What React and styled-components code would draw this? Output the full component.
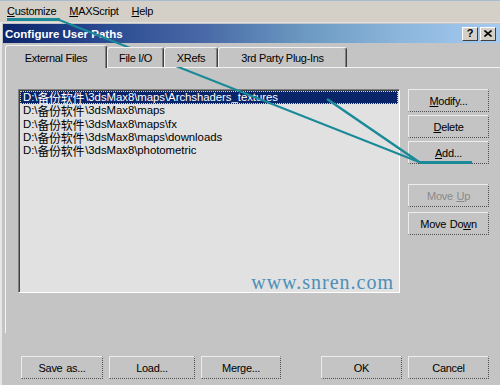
import React from 'react';
import styled, { createGlobalStyle } from 'styled-components';

const GlobalStyle = createGlobalStyle`
  html, body { margin: 0; padding: 0; background: #c4c4c4; }
  body { font-family: "Liberation Sans", Arial, sans-serif; }
`;

const Screen = styled.div`
  position: relative;
  width: 500px;
  height: 385px;
  overflow: hidden;
  display: flex;
  flex-direction: column;
  background: #c4c4c4;
  font-family: "Liberation Sans", Arial, sans-serif;
  font-size: 11px;
  letter-spacing: -0.3px;
  color: #000;
`;

const MenuBar = styled.div`
  height: 21px;
  border-top: 1px solid #a9bccf;
  background: #d4d0c8;
  display: flex;
  align-items: center;
  gap: 13px;
  padding-left: 7px;
`;

const MenuItem = styled.span`
  line-height: 21px;
`;

const Key = styled.span`
  text-decoration: underline;
  text-underline-offset: 1px;
`;

const Dialog = styled.div`
  flex: 1;
  display: flex;
  flex-direction: column;
  border-top: 1px solid #e2e2e2;
  border-left: 2px solid #e6e6e6;
  padding: 1px 0 0 1px;
  background: #c4c4c4;
`;

const TitleBar = styled.div`
  height: 19px;
  display: flex;
  align-items: center;
  justify-content: space-between;
  padding: 0 4px 0 2px;
  background: linear-gradient(
    90deg,
    #0a246a 0%,
    #2a4a92 20%,
    #4868a6 40%,
    #6a98c0 60%,
    #8cb6dc 80%,
    #a6caf0 100%
  );
`;

const TitleText = styled.span`
  color: #fff;
  font-weight: bold;
  font-size: 11.5px;
  letter-spacing: 0;
`;

const TitleButtons = styled.div`
  display: flex;
  gap: 2px;
`;

const TitleButton = styled.div`
  width: 16px;
  height: 14px;
  box-sizing: border-box;
  background: #d4d0c8;
  border: 1px solid;
  border-color: #fff #404040 #404040 #fff;
  display: flex;
  align-items: center;
  justify-content: center;
  font-weight: bold;
  font-size: 11px;
  letter-spacing: 0;
  line-height: 1;
`;

const Tabs = styled.div`
  display: flex;
  align-items: flex-end;
  height: 22px;
  margin-top: 2px;
  padding-left: 2px;
  position: relative;
  z-index: 1;
`;

const Tab = styled.div`
  width: ${(p) => p.$w}px;
  height: ${(p) => (p.$active ? 23 : 20)}px;
  box-sizing: border-box;
  margin-bottom: ${(p) => (p.$active ? -1 : 0)}px;
  padding-top: ${(p) => (p.$active ? 1 : 0)}px;
  background: #c4c4c4;
  border-top: 1px solid #f2f2f2;
  border-left: 1px solid #f2f2f2;
  border-right: 1px solid #404040;
  box-shadow: inset -1px 0 #808080;
  border-radius: 3px 3px 0 0;
  display: flex;
  align-items: center;
  justify-content: center;
  white-space: nowrap;
`;

const Panel = styled.div`
  margin-left: 2px;
  border-top: 1px solid #f2f2f2;
  border-left: 1px solid #f2f2f2;
  padding: 21px 0 40px 12px;
  display: grid;
  grid-template-columns: 382px 81px;
  column-gap: 8px;
  align-items: start;
`;

const ListBox = styled.div`
  position: relative;
  height: 204px;
  box-sizing: border-box;
  border: 1px solid;
  border-color: #808080 #ffffff #ffffff #808080;
  box-shadow: inset 1px 1px #404040;
  background: #e1e1e1;
  padding: 1px;
  overflow: hidden;
`;

const Row = styled.div`
  display: flex;
  align-items: center;
  height: 13.3px;
  padding-left: 3px;
  white-space: nowrap;
  font-size: 11.4px;
  line-height: 13px;
  letter-spacing: -0.05px;
  color: ${(p) => (p.$selected ? '#fff' : '#000')};
  background: ${(p) => (p.$selected ? '#0a246a' : 'transparent')};
  outline: ${(p) => (p.$selected ? '1px dotted #e6dea0' : 'none')};
  outline-offset: -1px;
`;

const Cjk = styled.span`
  font-family: "Noto Sans CJK SC", "Liberation Sans", sans-serif;
  font-size: 12px;
  line-height: 13px;
  letter-spacing: -0.3px;
  margin-right: 1px;
`;

const Watermark = styled.span`
  position: absolute;
  right: 5px;
  bottom: 0;
  font-family: "Liberation Serif", "Times New Roman", serif;
  font-size: 20px;
  line-height: 20px;
  letter-spacing: 1px;
  color: #4b8fb9;
`;

const ButtonColumn = styled.div`
  display: flex;
  flex-direction: column;
`;

const Button = styled.button`
  width: ${(p) => p.$w || 81}px;
  height: 23px;
  margin: ${(p) => p.$mt || 0}px 0 0 0;
  padding: 0;
  box-sizing: border-box;
  background: #c4c4c4;
  border-top: 1px solid #ececec;
  border-left: 1px solid #ececec;
  border-right: 1px dotted #505050;
  border-bottom: 1px dotted #505050;
  font: inherit;
  letter-spacing: inherit;
  word-spacing: 1px;
  color: ${(p) => (p.$disabled ? '#8a8a8a' : '#000')};
  display: flex;
  align-items: center;
  justify-content: center;
  white-space: pre;
`;

const Footer = styled.div`
  display: flex;
  justify-content: space-between;
  padding: 23px 11px 0 18px;
`;

const FooterGroup = styled.div`
  display: flex;
  gap: 6px;
`;

const Overlay = styled.svg`
  position: absolute;
  top: 0;
  left: 0;
  pointer-events: none;
`;

const rows = [
  'maps\\Archshaders_textures',
  'maps',
  'maps\\fx',
  'maps\\downloads',
  'photometric',
];

const teal = '#1b8a98';

export default function App() {
  return (
    <>
      <GlobalStyle />
      <Screen>
        <MenuBar>
          <MenuItem><Key>C</Key>ustomize</MenuItem>
          <MenuItem><Key>M</Key>AXScript</MenuItem>
          <MenuItem><Key>H</Key>elp</MenuItem>
        </MenuBar>
        <Dialog>
          <TitleBar>
            <TitleText>Configure User Paths</TitleText>
            <TitleButtons>
              <TitleButton>?</TitleButton>
              <TitleButton>
                <svg width="8" height="7" viewBox="0 0 8 7">
                  <path d="M0.5 0.5 L7.5 6.5 M7.5 0.5 L0.5 6.5" stroke="#000" strokeWidth="1.6" />
                </svg>
              </TitleButton>
            </TitleButtons>
          </TitleBar>
          <Tabs>
            <Tab $active $w={102}>External Files</Tab>
            <Tab $w={57}>File I/O</Tab>
            <Tab $w={54}>XRefs</Tab>
            <Tab $w={129}>3rd Party Plug-Ins</Tab>
          </Tabs>
          <Panel>
            <ListBox>
              {rows.map((r, i) => (
                <Row key={r} $selected={i === 0}>
                  <span>D:\</span>
                  <Cjk>备份软件</Cjk>
                  <span>{'\\3dsMax8\\' + r}</span>
                </Row>
              ))}
              <Watermark>www.snren.com</Watermark>
            </ListBox>
            <ButtonColumn>
              <Button><Key>M</Key>odify...</Button>
              <Button $mt={3}><Key>D</Key>elete</Button>
              <Button $mt={3}><Key>A</Key>dd...</Button>
              <Button $mt={20} $disabled>{'Move '}<Key>U</Key>p</Button>
              <Button $mt={5}>Move Do<Key>w</Key>n</Button>
            </ButtonColumn>
          </Panel>
          <Footer>
            <FooterGroup>
              <Button $w={82}>Save as...</Button>
              <Button $w={86}>Load...</Button>
              <Button $w={80}>Merge...</Button>
            </FooterGroup>
            <FooterGroup>
              <Button $w={81}>OK</Button>
              <Button $w={81}>Cancel</Button>
            </FooterGroup>
          </Footer>
        </Dialog>
        <Overlay width="500" height="385" viewBox="0 0 500 385">
          <rect x="7" y="18" width="53" height="3" fill={teal} />
          <line x1="58" y1="19.5" x2="419" y2="162" stroke={teal} strokeWidth="2" />
          <line x1="327" y1="99" x2="419" y2="162" stroke={teal} strokeWidth="2.5" />
          <rect x="419" y="161" width="53" height="3" fill={teal} />
        </Overlay>
      </Screen>
    </>
  );
}
